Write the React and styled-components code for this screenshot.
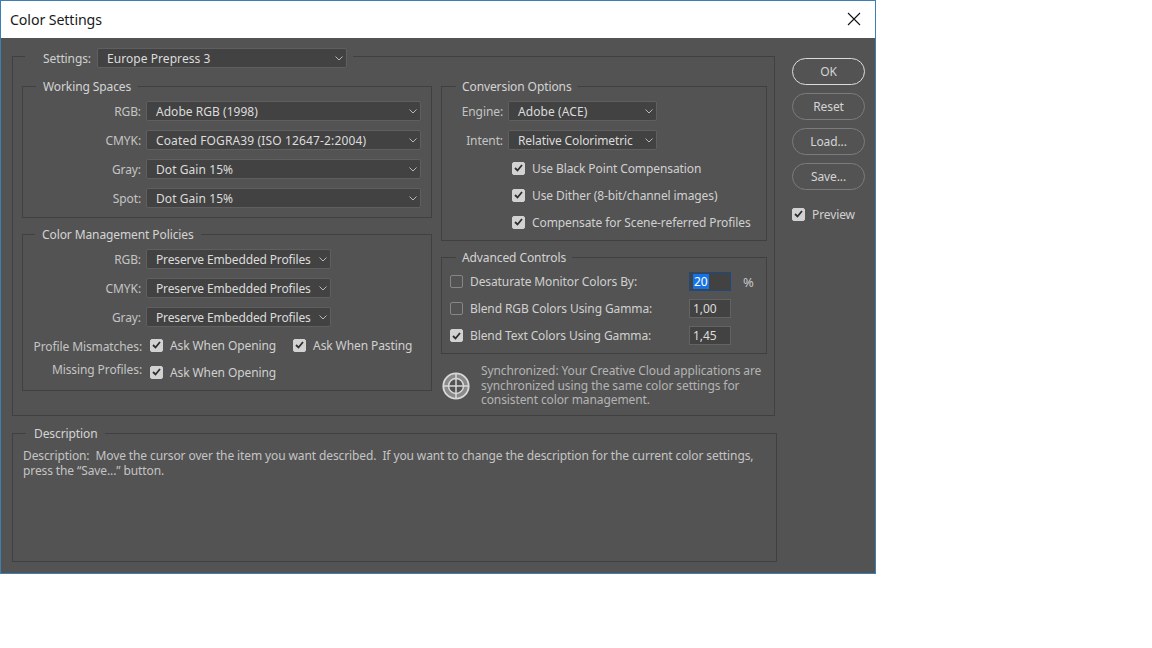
import React from 'react';
import styled, { createGlobalStyle } from 'styled-components';

const GlobalStyle = createGlobalStyle`
  html, body {
    margin: 0;
    background: #fff;
  }
  * {
    box-sizing: border-box;
  }
`;

const Win = styled.div`
  width: 876px;
  height: 574px;
  border: 1px solid #3d7fb3;
  background: #535353;
  display: flex;
  flex-direction: column;
  font-family: "Noto Sans", sans-serif;
  font-size: 12px;
  letter-spacing: -0.1px;
  color: #c8c8c8;
`;

const TitleBar = styled.div`
  height: 37px;
  flex: none;
  background: #fff;
  display: flex;
  align-items: center;
  justify-content: space-between;
  padding: 0 14px 1px 9px;
  color: #1a1a1a;
  font-size: 14.2px;
`;

const Body = styled.div`
  flex: 1;
  display: flex;
  padding: 6px 10px 0 11px;
`;

const MainColumn = styled.div`
  width: 765px;
  flex: none;
  display: flex;
  flex-direction: column;
  gap: 9px;
`;

const Side = styled.div`
  margin-left: 15px;
  padding-top: 14px;
  display: flex;
  flex-direction: column;
  gap: 8px;
  width: 73px;
`;

const Group = styled.fieldset`
  margin: 0;
  padding: ${(p) => p.$pad || '6px 0 0'};
  min-width: 0;
  width: ${(p) => p.$w}px;
  height: ${(p) => p.$h}px;
  border: 1px solid #404040;
`;

const Caption = styled.legend`
  margin: 0 0 0 ${(p) => p.$left || 13}px;
  padding: 1px ${(p) => p.$gap || 7}px 0;
  line-height: 16px;
  color: #d4d4d4;
`;

const SettingsLegend = styled.legend`
  margin: 0 0 0 12px;
  padding: 4px 6px 0 18px;
  display: flex;
  align-items: center;
  gap: 6px;
  color: #d0d0d0;
`;

const Columns = styled.div`
  display: flex;
  gap: 9px;
  padding-left: 9px;
`;

const Stack = styled.div`
  display: flex;
  flex-direction: column;
  gap: 8px;
`;

const Rows = styled.div`
  display: flex;
  flex-direction: column;
  gap: 9px;
`;

const Row = styled.div`
  display: flex;
  align-items: center;
  height: 20px;
`;

const Label = styled.span`
  flex: none;
  width: ${(p) => p.$w}px;
  text-align: right;
  padding-right: 5px;
  color: #c4c4c4;
  white-space: nowrap;
`;

const SelectBox = styled.div`
  width: ${(p) => p.$w}px;
  height: 20px;
  flex: none;
  display: flex;
  align-items: center;
  justify-content: space-between;
  padding: 0 3px 0 9px;
  background: #424242;
  border: 1px solid #5f5f5f;
  border-radius: 2px;
  color: #dcdcdc;
  white-space: nowrap;
  letter-spacing: ${(p) => p.$track}px;
`;

const Chevron = styled.svg`
  width: 8px;
  height: 5px;
  flex: none;
  color: #b8b8b8;
`;

const Select = ({ w, track = 0.03, children }) => (
  <SelectBox $w={w} $track={track}>
    {children}
    <Chevron viewBox="0 0 8 5" fill="none" stroke="currentColor" strokeWidth="1">
      <path d="M0.5 0.5 L4 4 L7.5 0.5" />
    </Chevron>
  </SelectBox>
);

const CheckRow = styled.div`
  display: flex;
  align-items: center;
  gap: 7px;
  height: 14px;
  color: #d0d0d0;
  white-space: nowrap;
`;

const Box = styled.span`
  width: 13px;
  height: 13px;
  flex: none;
  border-radius: 2px;
  display: flex;
  align-items: center;
  justify-content: center;
  background: ${(p) => (p.$on ? '#d2d2d2' : 'transparent')};
  border: 1px solid ${(p) => (p.$on ? '#d2d2d2' : '#868686')};
`;

const Check = ({ on = true, children }) => (
  <CheckRow>
    <Box $on={on}>
      {on && (
        <svg width="9" height="8" viewBox="0 0 9 8" fill="none" stroke="#2e2e2e" strokeWidth="1.8">
          <path d="M1 4 L3.5 6.5 L8 1" />
        </svg>
      )}
    </Box>
    {children}
  </CheckRow>
);

const CheckGrid = styled.div`
  display: grid;
  grid-template-columns: 123px 1fr;
  grid-auto-rows: 14px;
  row-gap: 13px;
  margin-top: 11px;
`;

const PolicyLabel = styled.span`
  text-align: right;
  padding-right: 4px;
  color: #c4c4c4;
  white-space: nowrap;
  line-height: ${(p) => p.$lh}px;
`;

const CheckPair = styled.div`
  display: flex;
  padding-left: 4px;
  gap: 17px;
`;

const ConvertChecks = styled.div`
  display: flex;
  flex-direction: column;
  gap: 13px;
  margin: 11px 0 0 70px;
`;

const AdvRows = styled.div`
  display: flex;
  flex-direction: column;
  gap: 8px;
  padding-left: 8px;
`;

const AdvRow = styled.div`
  height: 19px;
  display: flex;
  align-items: center;
`;

const AdvLabel = styled.div`
  width: 239px;
  flex: none;
`;

const Field = styled.div`
  width: 42px;
  height: 19px;
  flex: none;
  display: flex;
  align-items: center;
  padding-left: 3px;
  background: #424242;
  border: 1px solid ${(p) => (p.$focus ? '#1d4b80' : '#636363')};
  color: #dcdcdc;
`;

const Selected = styled.span`
  background: #1473e6;
  color: #fff;
  line-height: 15px;
  padding: 0 1px;
`;

const Percent = styled.span`
  margin-left: 12px;
  font-size: 13px;
  color: #c8c8c8;
`;

const SyncRow = styled.div`
  display: flex;
  align-items: center;
  gap: 11px;
  margin-top: 2px;
  padding-left: 1px;
`;

const SyncText = styled.div`
  width: 290px;
  line-height: 14.5px;
  color: #b4b4b4;
`;

const DescText = styled.div`
  padding: 7px 10px 0;
  line-height: 14.5px;
  letter-spacing: -0.11px;
  color: #c4c4c4;
  white-space: pre;
`;

const Pill = styled.button`
  width: 73px;
  height: 27px;
  padding: 0;
  border-radius: 14px;
  background: transparent;
  border: 1px solid ${(p) => (p.$primary ? '#dcdcdc' : '#7c7c7c')};
  color: #d4d4d4;
  font: inherit;
  letter-spacing: inherit;
`;

const Preview = styled.div`
  margin-top: 9px;
`;

const CloseIcon = () => (
  <svg width="14" height="14" viewBox="0 0 14 14" fill="none" stroke="#111" strokeWidth="1.1">
    <path d="M1 1 L13 13 M13 1 L1 13" />
  </svg>
);

const SyncIcon = () => (
  <svg width="28" height="28" viewBox="0 0 28 28" fill="none" stroke="#d8d8d8" style={{ flex: 'none' }}>
    <circle cx="14" cy="14" r="12.7" fill="#8a8a8a" strokeWidth="1.8" />
    <circle cx="14" cy="14" r="7.5" fill="#535353" strokeWidth="1.5" />
    <path d="M14 1 V27 M1 14 H27" strokeWidth="1.5" />
  </svg>
);

const spaces = [
  ['RGB:', 'Adobe RGB (1998)', 0.03],
  ['CMYK:', 'Coated FOGRA39 (ISO 12647-2:2004)', 0.14],
  ['Gray:', 'Dot Gain 15%', 0.07],
  ['Spot:', 'Dot Gain 15%', 0.07],
];

const policies = ['RGB:', 'CMYK:', 'Gray:'];

const App = () => (
  <>
    <GlobalStyle />
    <Win>
      <TitleBar>
        Color Settings
        <CloseIcon />
      </TitleBar>
      <Body>
        <MainColumn>
          <Group $w={763} $h={372} $pad="10px 0 0">
            <SettingsLegend>
              Settings:
              <Select w={250} track={0.06}>Europe Prepress 3</Select>
            </SettingsLegend>
            <Columns>
              <Stack>
                <Group $w={410} $h={140}>
                  <Caption>Working Spaces</Caption>
                  <Rows>
                    {spaces.map(([label, value, track]) => (
                      <Row key={label}>
                        <Label $w={123}>{label}</Label>
                        <Select w={275} track={track}>{value}</Select>
                      </Row>
                    ))}
                  </Rows>
                </Group>
                <Group $w={410} $h={165}>
                  <Caption $left={12}>Color Management Policies</Caption>
                  <Rows>
                    {policies.map((label) => (
                      <Row key={label}>
                        <Label $w={123}>{label}</Label>
                        <Select w={185} track={-0.14}>Preserve Embedded Profiles</Select>
                      </Row>
                    ))}
                  </Rows>
                  <CheckGrid>
                    <PolicyLabel $lh={18}>Profile Mismatches:</PolicyLabel>
                    <CheckPair>
                      <Check>Ask When Opening</Check>
                      <Check>Ask When Pasting</Check>
                    </CheckPair>
                    <PolicyLabel $lh={10}>Missing Profiles:</PolicyLabel>
                    <CheckPair>
                      <Check>Ask When Opening</Check>
                    </CheckPair>
                  </CheckGrid>
                </Group>
              </Stack>
              <Stack>
                <Group $w={326} $h={163}>
                  <Caption $left={14} $gap={6}>Conversion Options</Caption>
                  <Rows>
                    <Row>
                      <Label $w={66}>Engine:</Label>
                      <Select w={149} track={0.08}>Adobe (ACE)</Select>
                    </Row>
                    <Row>
                      <Label $w={66}>Intent:</Label>
                      <Select w={149} track={-0.1}>Relative Colorimetric</Select>
                    </Row>
                  </Rows>
                  <ConvertChecks>
                    <Check>Use Black Point Compensation</Check>
                    <Check>Use Dither (8-bit/channel images)</Check>
                    <Check>Compensate for Scene-referred Profiles</Check>
                  </ConvertChecks>
                </Group>
                <Group $w={326} $h={105}>
                  <Caption $left={14} $gap={6}>Advanced Controls</Caption>
                  <AdvRows>
                    <AdvRow>
                      <AdvLabel><Check on={false}>Desaturate Monitor Colors By:</Check></AdvLabel>
                      <Field $focus><Selected>20</Selected></Field>
                      <Percent>%</Percent>
                    </AdvRow>
                    <AdvRow>
                      <AdvLabel><Check on={false}>Blend RGB Colors Using Gamma:</Check></AdvLabel>
                      <Field>1,00</Field>
                    </AdvRow>
                    <AdvRow>
                      <AdvLabel><Check>Blend Text Colors Using Gamma:</Check></AdvLabel>
                      <Field>1,45</Field>
                    </AdvRow>
                  </AdvRows>
                </Group>
                <SyncRow>
                  <SyncIcon />
                  <SyncText>
                    Synchronized: Your Creative Cloud applications are synchronized using the same color settings for consistent color management.
                  </SyncText>
                </SyncRow>
              </Stack>
            </Columns>
          </Group>
          <Group $w={765} $h={137} $pad="0">
            <Caption $gap={8}>Description</Caption>
            <DescText>
              {'Description:  Move the cursor over the item you want described.  If you want to change the description for the current color settings,\npress the “Save...” button.'}
            </DescText>
          </Group>
        </MainColumn>
        <Side>
          <Pill $primary>OK</Pill>
          <Pill>Reset</Pill>
          <Pill>Load...</Pill>
          <Pill>Save...</Pill>
          <Preview>
            <Check>Preview</Check>
          </Preview>
        </Side>
      </Body>
    </Win>
  </>
);

export default App;
